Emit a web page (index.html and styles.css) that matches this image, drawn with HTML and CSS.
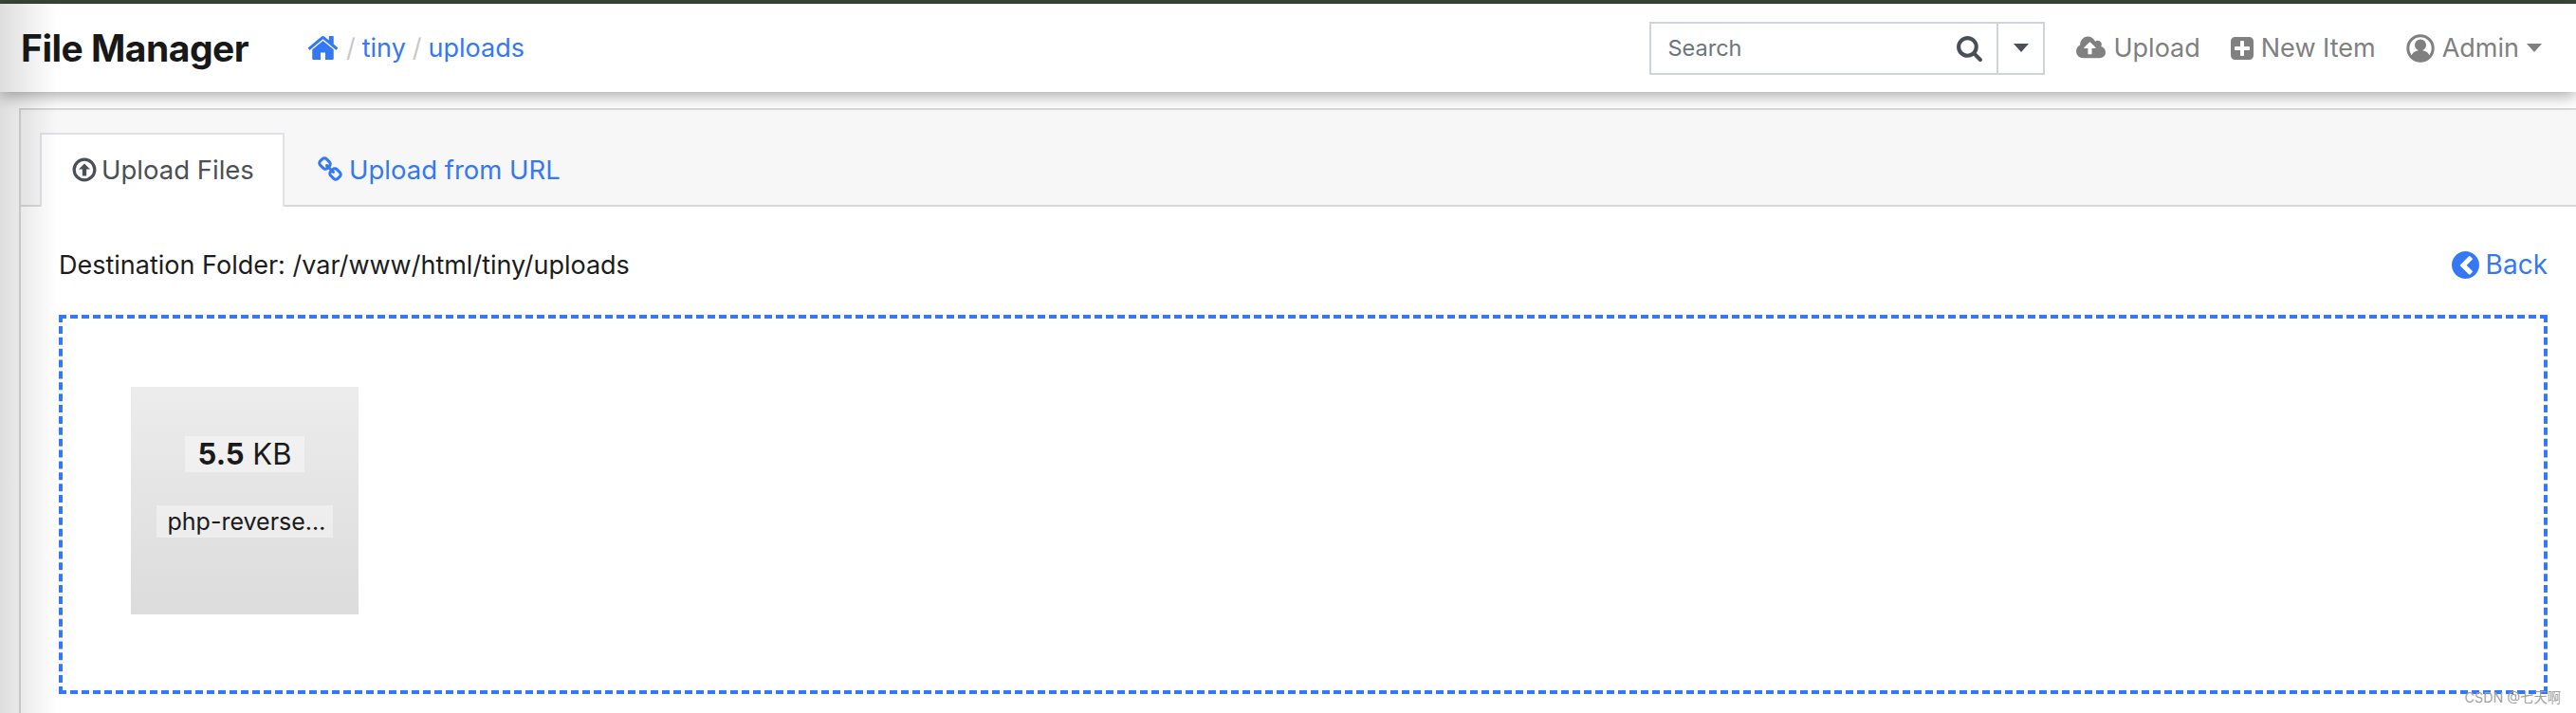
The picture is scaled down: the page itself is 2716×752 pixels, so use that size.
FILE: index.html
```html
<!DOCTYPE html>
<html lang="en">
<head>
    <meta charset="UTF-8">
    <meta name="viewport" content="width=device-width, initial-scale=1.0">
    <title>File Manager</title>
    <link rel="stylesheet" href="styles.css">
</head>
<body>
    <div class="top-strip"></div>
    <nav class="navbar">
        <span class="brand">File Manager</span>
        <div class="crumbs">
            <svg class="icon icon-home" viewBox="0 0 1792 1792"><path d="M1472 992v480q0 26-19 45t-45 19h-384v-384h-256v384h-384q-26 0-45-19t-19-45v-480q0-1 .5-3t.5-3l575-474 575 474q1 2 1 6zm223-69l-62 74q-8 9-21 11h-3q-13 0-21-7l-692-577-692 577q-12 8-24 7-13-2-21-11l-62-74q-8-10-7-23.500t11-21.500l719-599q32-26 76-26t76 26l244 204v-195q0-14 9-23t23-9h192q14 0 23 9t9 23v408l219 182q10 8 11 21.500t-7 23.500z"/></svg>
            <span class="sep">/</span>
            <a href="#">tiny</a>
            <span class="sep">/</span>
            <a href="#">uploads</a>
        </div>
        <div class="nav-right">
            <div class="search">
                <span class="search-text">Search</span>
                <svg class="icon icon-search" viewBox="0 0 1792 1792"><path d="M1216 832q0-185-131.500-316.500t-316.500-131.500-316.500 131.500-131.500 316.500 131.500 316.500 316.500 131.500 316.500-131.500 131.500-316.500zm512 832q0 52-38 90t-90 38q-54 0-90-38l-343-342q-179 124-399 124-143 0-273.500-55.500t-225-150-150-225-55.500-273.500 55.500-273.500 150-225 225-150 273.500-55.500 273.500 55.500 225 150 150 225 55.500 273.500q0 220-124 399l343 343q37 37 37 90z"/></svg>
                <span class="search-drop"><span class="caret caret-dark"></span></span>
            </div>
            <a class="nav-item" href="#">
                <svg class="icon icon-cloud" viewBox="0 0 1920 1792"><path d="M1280 864q0-14-9-23l-352-352q-9-9-23-9t-23 9l-351 351q-10 12-10 24 0 14 9 23t23 9h224v352q0 13 9.500 22.500t22.500 9.500h192q13 0 22.500-9.500t9.500-22.500v-352h224q13 0 22.500-9.500t9.500-22.500zm640 288q0 159-112.500 271.500t-271.500 112.500h-1088q-185 0-316.500-131.500t-131.500-316.500q0-130 70-240t188-165q-2-30-2-43 0-212 150-362t362-150q156 0 285.500 87t188.500 231q71-62 166-62 106 0 181 75t75 181q0 76-41 138 130 31 213.500 135.500t83.500 238.500z"/></svg>
                Upload
            </a>
            <a class="nav-item" href="#">
                <svg class="icon icon-plus" viewBox="128 128 1536 1536"><path d="M1408 960v-128q0-26-19-45t-45-19h-320v-320q0-26-19-45t-45-19h-128q-26 0-45 19t-19 45v320h-320q-26 0-45 19t-19 45v128q0 26 19 45t45 19h320v320q0 26 19 45t45 19h128q26 0 45-19t19-45v-320h320q26 0 45-19t19-45zm256-544v960q0 119-84.500 203.500t-203.500 84.500h-960q-119 0-203.500-84.500t-84.500-203.500v-960q0-119 84.500-203.500t203.500-84.500h960q119 0 203.500 84.500t84.500 203.500z"/></svg>
                New Item
            </a>
            <a class="nav-item" href="#">
                <svg class="icon icon-user" viewBox="0 0 30 30"><circle cx="15" cy="15" r="13.2" fill="none" stroke="currentColor" stroke-width="3"/><circle cx="15" cy="11.500" r="6"/><path d="M5 24c1.500-5 5-7 10-7s8.500 2 10 7c-2.500 2.500-6 4-10 4s-7.500-1.500-10-4z"/></svg>
                Admin
                <span class="caret caret-grey"></span>
            </a>
        </div>
    </nav>

    <main class="page">
        <div class="card">
            <div class="card-header">
                <div class="tab tab-active">
                    <svg class="icon icon-tab" viewBox="0 0 24 24"><circle cx="12" cy="12" r="10" fill="none" stroke="currentColor" stroke-width="3"/><path d="M12 6l5.500 5.500h-3.500v6.500h-4v-6.500h-3.500z"/></svg>
                    Upload Files
                </div>
                <a class="tab" href="#">
                    <svg class="icon icon-link" viewBox="0 0 1792 1792"><path d="M1520 1216q0-40-28-68l-208-208q-28-28-68-28-42 0-72 32 3 3 19 18.500t21.500 21.500 15 19 13 25.500 3.500 27.500q0 40-28 68t-68 28q-15 0-27.500-3.500t-25.500-13-19-15-21.500-21.500-18.500-19q-33 31-33 73 0 40 28 68l206 207q27 27 68 27 40 0 68-26l147-146q28-28 28-67zm-703-705q0-40-28-68l-206-207q-28-28-68-28-39 0-68 27l-147 146q-28 28-28 67 0 40 28 68l208 208q27 27 68 27 42 0 72-31-3-3-19-18.500t-21.500-21.500-15-19-13-25.500-3.500-27.500q0-40 28-68t68-28q15 0 27.500 3.500t25.500 13 19 15 21.500 21.500 18.500 19q33-31 33-73zm895 705q0 120-85 203l-147 146q-83 83-203 83-121 0-204-85l-206-207q-83-83-83-203 0-123 88-209l-88-88q-86 88-208 88-120 0-204-84l-208-208q-84-84-84-204t85-203l147-146q83-83 203-83 121 0 204 85l206 207q83 83 83 203 0 123-88 209l88 88q86-88 208-88 120 0 204 84l208 208q84 84 84 204z"/></svg>
                    Upload from URL
                </a>
            </div>
            <div class="card-body">
                <div class="dest-row">
                    <span>Destination Folder: /var/www/html/tiny/uploads</span>
                    <a class="back" href="#">
                        <svg class="icon icon-back" viewBox="128 128 1536 1536"><path d="M1163 1411l102-102q19-19 19-45t-19-45l-307-307 307-307q19-19 19-45t-19-45l-102-102q-19-19-45-19t-45 19l-454 454q-19 19-19 45t19 45l454 454q19 19 45 19t45-19zm501-515q0 209-103 385.500t-279.500 279.500-385.500 103-385.500-103-279.500-279.500-103-385.500 103-385.500 279.500-279.500 385.500-103 385.500 103 279.500 279.500 103 385.500z"/></svg>
                        Back
                    </a>
                </div>
                <div class="dropzone">
                    <div class="preview">
                        <span class="size-label"><b>5.5</b> KB</span>
                        <span class="name-label">php-reverse…</span>
                    </div>
                </div>
            </div>
        </div>
    </main>

    <div class="edge-shade"></div>
    <div class="watermark">CSDN @七天啊</div>
</body>
</html>
```

FILE: styles.css
```css
html, body { height: 100%; }
body { margin: 0; position: relative; overflow: hidden; background: #fff; color: #212529; font-family: Inter, "Noto Sans CJK SC", sans-serif; font-size: 27px; }
a { color: #3478f6; text-decoration: none; }

.top-strip { height: 4px; background: #39483a; }

.navbar { position: relative; z-index: 2; height: 93px; display: flex; align-items: center; padding: 0 36px 0 22px; background: #fff; box-shadow: 0 4px 16px rgba(0, 0, 0, 0.35); }
.brand { width: 301px; font-size: 39px; font-weight: 700; letter-spacing: -0.5px; color: #181818; }
.crumbs { display: flex; align-items: center; gap: 7px; font-size: 27px; }
.sep { color: #c8c8c8; }
.nav-right { margin-left: auto; display: flex; align-items: center; }

.icon { display: block; fill: currentColor; flex: none; }
.icon-home { width: 35px; height: 35px; color: #3478f6; }
.icon-search { width: 29px; height: 29px; color: #4a4f57; margin-right: 14px; }
.icon-cloud { width: 31px; height: 30px; }
.icon-plus { width: 24px; height: 24px; }
.icon-user { width: 30px; height: 30px; }
.icon-tab { width: 26px; height: 26px; }
.icon-link { width: 28px; height: 28px; }
.icon-back { width: 29px; height: 29px; }

.search { display: flex; align-items: center; width: 417px; height: 56px; box-sizing: border-box; border: 2px solid #ced4da; margin-right: 33px; }
.search-text { flex: 1; padding-left: 17px; font-size: 23.5px; color: #6c757d; }
.search-drop { display: flex; align-items: center; justify-content: center; width: 47px; height: 100%; border-left: 2px solid #ced4da; }
.caret { display: inline-block; width: 0; height: 0; border-left: 8px solid transparent; border-right: 8px solid transparent; border-top: 9px solid; }
.caret-dark { color: #495057; }
.caret-grey { color: #808080; }

.nav-item { display: flex; align-items: center; gap: 8px; margin-right: 32px; font-size: 27px; color: #808080; }
.nav-item:last-child { margin-right: 0; }

.page { padding: 17px 0 0 20px; }
.card { border: 2px solid #d9d9d9; border-right: 0; border-bottom: 0; }
.card-header { display: flex; align-items: flex-end; height: 100px; padding-left: 20px; background: #f7f7f7; border-bottom: 2px solid #d9d9d9; }
.tab { display: flex; align-items: center; gap: 6px; height: 78px; box-sizing: border-box; padding: 0 32px 2px; margin-bottom: -2px; border: 2px solid transparent; border-bottom: 0; font-size: 27.5px; }
.tab-active { width: 258px; padding: 0 0 2px 32px; gap: 5px; background: #fff; border-color: #dee2e6; color: #495057; }

.card-body { padding: 42px 30px 20px 40px; background: #fff; }
.dest-row { display: flex; justify-content: space-between; align-items: center; height: 38px; margin-bottom: 34px; color: #1c1c1c; }
.back { display: flex; align-items: center; gap: 7px; font-size: 28px; }

.dropzone { box-sizing: border-box; height: 400px; padding: 72px; border: 4px dashed #3478f6; }
.preview { display: flex; flex-direction: column; align-items: center; box-sizing: border-box; width: 240px; height: 240px; padding-top: 52px; background: linear-gradient(#ececec, #dcdcdc); color: #1a1a1a; }
.size-label { padding: 0 14px; height: 38px; line-height: 38px; font-size: 31px; background: rgba(255, 255, 255, 0.4); }
.name-label { margin-top: 35px; padding: 0 8px 0 12px; height: 34px; line-height: 34px; font-size: 25px; background: rgba(255, 255, 255, 0.4); }

/* soft shade down the left side of the window */
.edge-shade { position: absolute; z-index: 3; left: 0; top: 4px; bottom: 0; width: 60px; pointer-events: none; background: linear-gradient(90deg, rgba(0, 0, 0, 0.13), rgba(0, 0, 0, 0)); }
.watermark { position: absolute; z-index: 4; right: 16px; bottom: 8px; font-size: 14.3px; line-height: 16px; color: #a0a0a0; }
```
